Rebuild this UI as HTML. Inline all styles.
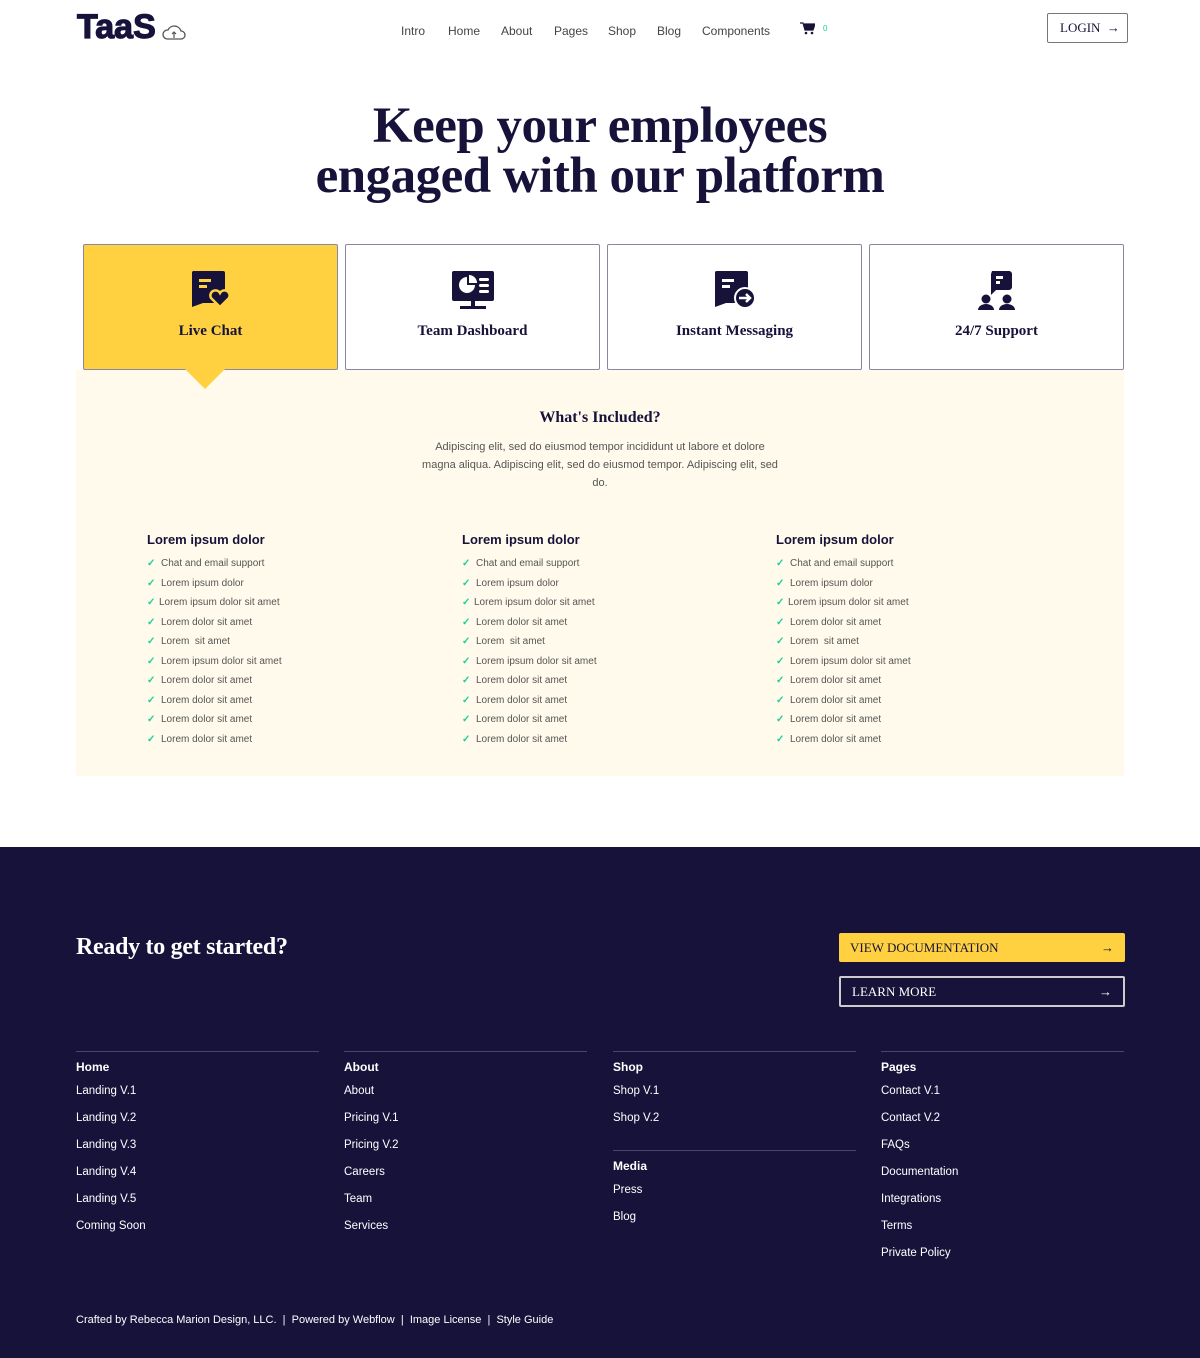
<!DOCTYPE html>
<html><head><meta charset="utf-8"><style>
*{margin:0;padding:0;box-sizing:border-box}
body{width:1200px;height:1358px;background:#fff;font-family:"Liberation Sans",sans-serif;color:#16123a;position:relative;overflow:hidden}
.abs{position:absolute}
.serif{font-family:"Liberation Serif",serif}
.nav a{position:absolute;top:24px;font-size:12px;color:#444;text-decoration:none}
.card{position:absolute;top:244px;width:255px;height:126px;border:1px solid #8a88a0;border-radius:2px;background:#fff;text-align:center}
.card .t{position:absolute;left:0;right:0;top:78px;font-family:"Liberation Serif",serif;font-weight:bold;font-size:15px}
.card svg{position:absolute;left:50%;top:24px;transform:translateX(-50%)}
.col{position:absolute;top:532px}
.col h4{font-size:13px;font-weight:bold;margin-bottom:7px;color:#16123a}
.col div{font-size:10px;color:#555;height:19.5px;line-height:19.5px}
.col div b{color:#1bcf9b;font-weight:bold;display:inline-block;width:14px}
.foot{position:absolute;top:1051px;width:243px;border-top:1px solid #4a466a;color:#fff;font-size:11.5px}
.foot h5{font-size:12px;font-weight:bold;margin-top:8px;margin-bottom:11px}
.foot p{height:27px}
</style></head><body>
<div class="abs" style="left:77px;top:8px;font-size:34px;font-weight:bold;letter-spacing:0px;color:#16123a;-webkit-text-stroke:1.2px #16123a">TaaS</div>
<svg class="abs" style="left:161px;top:22px" width="26" height="20" viewBox="0 0 26 20"><path d="M6 17h14a4 4 0 0 0 0-8 7 7 0 0 0-13-1 4.5 4.5 0 0 0-1 9z" fill="none" stroke="#555" stroke-width="1.3"/><path d="M13 16v-6m-2 2l2-2 2 2" fill="none" stroke="#555" stroke-width="1.2"/></svg>
<div class="nav"><a style="left:401px">Intro</a><a style="left:448px">Home</a><a style="left:501px">About</a><a style="left:554px">Pages</a><a style="left:608px">Shop</a><a style="left:657px">Blog</a><a style="left:702px">Components</a></div>
<svg class="abs" style="left:800px;top:22px" width="15" height="13" viewBox="0 0 15 13"><path d="M0 1h3l2 7h8l2-6H4" fill="#16123a" stroke="#16123a" stroke-width="1.2"/><circle cx="6" cy="11" r="1.3" fill="#16123a"/><circle cx="12" cy="11" r="1.3" fill="#16123a"/></svg>
<div class="abs" style="left:823px;top:24px;font-size:8px;color:#1bcf9b">0</div>
<div class="abs serif" style="left:1047px;top:13px;width:81px;height:30px;border:1px solid #777;border-radius:2px;font-size:13px;line-height:28px;padding-left:12px">LOGIN &nbsp;→</div>
<div class="abs serif" style="left:0;width:1200px;top:101px;text-align:center;font-size:51px;font-weight:bold;line-height:50px;letter-spacing:-0.5px">Keep your employees<br>engaged with our platform</div>
<div class="abs" style="left:76px;top:370px;width:1048px;height:406px;background:#fffaeb"></div>
<div class="card" style="left:83px;background:#ffd140"><svg width="44" height="40" viewBox="0 0 44 40"><path d="M4 2h30a2 2 0 0 1 2 2v30H14L3 38V3z" fill="#16123a"/><rect x="10" y="10" width="12" height="3" fill="#ffd140"/><rect x="10" y="16" width="8" height="3" fill="#ffd140"/><path d="M31 38l-9-9a5 5 0 0 1 9-5 5 5 0 0 1 9 5z" fill="#16123a" stroke="#ffd140" stroke-width="2.5"/></svg><div class="t">Live Chat</div></div>
<div class="abs" style="left:185px;top:369px;width:0;height:0;border-left:20px solid transparent;border-right:20px solid transparent;border-top:20px solid #ffd140"></div>
<div class="card" style="left:345px"><svg width="46" height="42" viewBox="0 0 46 42"><rect x="2" y="2" width="42" height="30" rx="2" fill="#16123a"/><path d="M17 8a8 8 0 1 0 8 8h-8z" fill="#fff"/><path d="M19 6v8h8a8 8 0 0 0-8-8z" fill="#fff"/><rect x="29" y="9" width="10" height="3" rx="1.5" fill="#fff"/><rect x="29" y="15" width="10" height="3" rx="1.5" fill="#fff"/><rect x="29" y="21" width="10" height="3" rx="1.5" fill="#fff"/><rect x="21" y="32" width="4" height="5" fill="#16123a"/><rect x="10" y="37" width="26" height="3" fill="#16123a"/></svg><div class="t">Team Dashboard</div></div>
<div class="card" style="left:607px"><svg width="46" height="42" viewBox="0 0 46 42"><path d="M4 2h30a2 2 0 0 1 2 2v30H14L3 38V3z" fill="#16123a"/><rect x="10" y="10" width="12" height="3" fill="#fff"/><rect x="10" y="16" width="8" height="3" fill="#fff"/><circle cx="33" cy="29" r="10" fill="#16123a" stroke="#fff" stroke-width="2"/><path d="M27 29h11m-4-4l4 4-4 4" fill="none" stroke="#fff" stroke-width="2.5"/></svg><div class="t">Instant Messaging</div></div>
<div class="card" style="left:869px"><svg width="44" height="42" viewBox="0 0 44 42"><path d="M17 2h17a3 3 0 0 1 3 3v13a3 3 0 0 1-3 3H21l-5 5V5z" fill="#16123a"/><rect x="21" y="7" width="7" height="3" fill="#fff"/><rect x="21" y="12" width="4" height="3" fill="#fff"/><circle cx="11" cy="30" r="4.5" fill="#16123a"/><path d="M3 41a8 6 0 0 1 16 0z" fill="#16123a"/><circle cx="32" cy="30" r="4.5" fill="#16123a"/><path d="M24 41a8 6 0 0 1 16 0z" fill="#16123a"/></svg><div class="t">24/7 Support</div></div>
<div class="abs serif" style="left:0;width:1200px;top:409px;text-align:center;font-size:16px;font-weight:bold">What's Included?</div>
<div class="abs" style="left:420px;width:360px;top:438px;text-align:center;font-size:11px;line-height:18px;color:#555">Adipiscing elit, sed do eiusmod tempor incididunt ut labore et dolore magna aliqua. Adipiscing elit, sed do eiusmod tempor. Adipiscing elit, sed do.</div>
<div class="col" style="left:147px"><h4>Lorem ipsum dolor</h4><div><b>✓</b>Chat and email support</div><div><b>✓</b>Lorem ipsum dolor</div><div><b style="width:12px">✓</b>Lorem ipsum dolor sit amet</div><div><b>✓</b>Lorem dolor sit amet</div><div><b>✓</b>Lorem &nbsp;sit amet</div><div><b>✓</b>Lorem ipsum dolor sit amet</div><div><b>✓</b>Lorem dolor sit amet</div><div><b>✓</b>Lorem dolor sit amet</div><div><b>✓</b>Lorem dolor sit amet</div><div><b>✓</b>Lorem dolor sit amet</div></div>
<div class="col" style="left:462px"><h4>Lorem ipsum dolor</h4><div><b>✓</b>Chat and email support</div><div><b>✓</b>Lorem ipsum dolor</div><div><b style="width:12px">✓</b>Lorem ipsum dolor sit amet</div><div><b>✓</b>Lorem dolor sit amet</div><div><b>✓</b>Lorem &nbsp;sit amet</div><div><b>✓</b>Lorem ipsum dolor sit amet</div><div><b>✓</b>Lorem dolor sit amet</div><div><b>✓</b>Lorem dolor sit amet</div><div><b>✓</b>Lorem dolor sit amet</div><div><b>✓</b>Lorem dolor sit amet</div></div>
<div class="col" style="left:776px"><h4>Lorem ipsum dolor</h4><div><b>✓</b>Chat and email support</div><div><b>✓</b>Lorem ipsum dolor</div><div><b style="width:12px">✓</b>Lorem ipsum dolor sit amet</div><div><b>✓</b>Lorem dolor sit amet</div><div><b>✓</b>Lorem &nbsp;sit amet</div><div><b>✓</b>Lorem ipsum dolor sit amet</div><div><b>✓</b>Lorem dolor sit amet</div><div><b>✓</b>Lorem dolor sit amet</div><div><b>✓</b>Lorem dolor sit amet</div><div><b>✓</b>Lorem dolor sit amet</div></div>
<div class="abs" style="left:0;top:847px;width:1200px;height:511px;background:#16123a"></div>
<div class="abs serif" style="left:76px;top:934px;font-size:24px;font-weight:bold;color:#fff;letter-spacing:-0.3px">Ready to get started?</div>
<div class="abs serif" style="left:839px;top:933px;width:286px;height:29px;background:#ffd140;border-radius:2px;font-size:13px;line-height:29px;padding-left:11px">VIEW DOCUMENTATION<span style="position:absolute;right:11px">→</span></div>
<div class="abs serif" style="left:839px;top:976px;width:286px;height:31px;border:2px solid #ccc;border-radius:2px;color:#fff;font-size:13px;line-height:27px;padding-left:11px">LEARN MORE<span style="position:absolute;right:11px">→</span></div>
<div class="foot" style="left:76px"><h5>Home</h5><p>Landing V.1</p><p>Landing V.2</p><p>Landing V.3</p><p>Landing V.4</p><p>Landing V.5</p><p>Coming Soon</p></div>
<div class="foot" style="left:344px"><h5>About</h5><p>About</p><p>Pricing V.1</p><p>Pricing V.2</p><p>Careers</p><p>Team</p><p>Services</p></div>
<div class="foot" style="left:613px"><h5>Shop</h5><p>Shop V.1</p><p>Shop V.2</p></div>
<div class="foot" style="left:613px;top:1150px"><h5>Media</h5><p>Press</p><p>Blog</p></div>
<div class="foot" style="left:881px"><h5>Pages</h5><p>Contact V.1</p><p>Contact V.2</p><p>FAQs</p><p>Documentation</p><p>Integrations</p><p>Terms</p><p>Private Policy</p></div>
<div class="abs" style="left:76px;top:1314px;font-size:11px;color:#fff">Crafted by Rebecca Marion Design, LLC. &nbsp;| &nbsp;Powered by Webflow &nbsp;| &nbsp;Image License &nbsp;| &nbsp;Style Guide</div>
</body></html>
